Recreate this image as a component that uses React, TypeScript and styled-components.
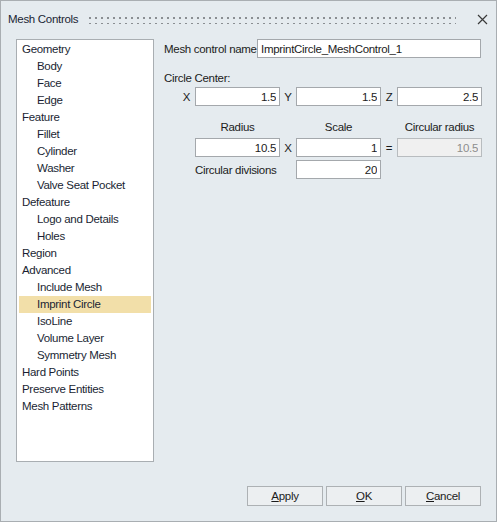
import React from 'react';
import { styled, createGlobalStyle } from 'styled-components';

const GlobalStyle = createGlobalStyle`
  html, body {
    margin: 0;
    padding: 0;
    background: #e5ebef;
  }
  * {
    box-sizing: border-box;
  }
`;

interface TreeItem {
  label: string;
  depth: number;
}

const treeItems: TreeItem[] = [
  { label: 'Geometry', depth: 0 },
  { label: 'Body', depth: 1 },
  { label: 'Face', depth: 1 },
  { label: 'Edge', depth: 1 },
  { label: 'Feature', depth: 0 },
  { label: 'Fillet', depth: 1 },
  { label: 'Cylinder', depth: 1 },
  { label: 'Washer', depth: 1 },
  { label: 'Valve Seat Pocket', depth: 1 },
  { label: 'Defeature', depth: 0 },
  { label: 'Logo and Details', depth: 1 },
  { label: 'Holes', depth: 1 },
  { label: 'Region', depth: 0 },
  { label: 'Advanced', depth: 0 },
  { label: 'Include Mesh', depth: 1 },
  { label: 'Imprint Circle', depth: 1 },
  { label: 'IsoLine', depth: 1 },
  { label: 'Volume Layer', depth: 1 },
  { label: 'Symmetry Mesh', depth: 1 },
  { label: 'Hard Points', depth: 0 },
  { label: 'Preserve Entities', depth: 0 },
  { label: 'Mesh Patterns', depth: 0 },
];

const selectedItem = 'Imprint Circle';

export default function App() {
  return (
    <>
      <GlobalStyle />
      <Styled.Window>
        <Styled.TitleBar>
          <Styled.Title>Mesh Controls</Styled.Title>
          <Styled.Grip />
          <Styled.Close aria-label="Close">
            <svg width="11" height="11" viewBox="0 0 11 11">
              <path d="M1 1L10 10M10 1L1 10" stroke="#3a3a3a" strokeWidth="1.2" />
            </svg>
          </Styled.Close>
        </Styled.TitleBar>

        <Styled.Body>
          <Styled.Tree>
            {treeItems.map((item) => (
              <Styled.TreeRow
                key={item.label}
                $depth={item.depth}
                $selected={item.label === selectedItem}
              >
                {item.label}
              </Styled.TreeRow>
            ))}
          </Styled.Tree>

          <Styled.Panel>
            <Styled.NameRow>
              <Styled.Label>Mesh control name</Styled.Label>
              <Styled.NameInput defaultValue="ImprintCircle_MeshControl_1" />
            </Styled.NameRow>

            <Styled.SectionLabel>Circle Center:</Styled.SectionLabel>

            <Styled.FieldGrid>
              <Styled.AxisLabel $first>X</Styled.AxisLabel>
              <Styled.Input defaultValue="1.5" />
              <Styled.AxisLabel>Y</Styled.AxisLabel>
              <Styled.Input defaultValue="1.5" />
              <Styled.AxisLabel>Z</Styled.AxisLabel>
              <Styled.Input defaultValue="2.5" />

              <span />
              <Styled.Head>Radius</Styled.Head>
              <span />
              <Styled.Head>Scale</Styled.Head>
              <span />
              <Styled.Head>Circular radius</Styled.Head>

              <span />
              <Styled.Input defaultValue="10.5" />
              <Styled.AxisLabel>X</Styled.AxisLabel>
              <Styled.Input defaultValue="1" />
              <Styled.AxisLabel>=</Styled.AxisLabel>
              <Styled.Input defaultValue="10.5" disabled />

              <span />
              <Styled.SpanLabel>Circular divisions</Styled.SpanLabel>
              <Styled.Input defaultValue="20" />
            </Styled.FieldGrid>
          </Styled.Panel>
        </Styled.Body>

        <Styled.Footer>
          <Styled.Button>
            <u>A</u>pply
          </Styled.Button>
          <Styled.Button>
            <u>O</u>K
          </Styled.Button>
          <Styled.Button>
            <u>C</u>ancel
          </Styled.Button>
        </Styled.Footer>
      </Styled.Window>
    </>
  );
}

const font = `'Liberation Sans', Arial, sans-serif`;

const Styled = {
  Window: styled.div`
    width: 497px;
    height: 522px;
    display: flex;
    flex-direction: column;
    border: 1px solid #a9aeb2;
    background: #e5ebef;
    font-family: ${font};
    font-size: 11.5px;
    letter-spacing: -0.3px;
    color: #1b1b1b;
  `,

  TitleBar: styled.div`
    height: 37px;
    flex: none;
    display: flex;
    align-items: center;
    padding: 0 8px 0 7px;
  `,
  Title: styled.div`
    color: #1a1f33;
    padding-bottom: 2px;
  `,
  Grip: styled.div`
    flex: 1;
    height: 8px;
    margin: 0 21px 0 11px;
    background-image: radial-gradient(circle, #8a8e92 0.9px, transparent 1.1px);
    background-size: 6px 6px;
    background-position: -2px -1px;
  `,
  Close: styled.div`
    width: 11px;
    height: 11px;
    display: flex;
    padding-bottom: 2px;
  `,

  Body: styled.div`
    flex: 1;
    display: flex;
    gap: 10px;
    padding: 1px 15px 0 15px;
    min-height: 0;
  `,

  Tree: styled.div`
    width: 138px;
    height: 423px;
    flex: none;
    background: #ffffff;
    border: 1px solid #a9aeb2;
    padding: 1px 2px 0;
  `,
  TreeRow: styled.div<{ $depth: number; $selected: boolean }>`
    height: 17px;
    line-height: 17px;
    white-space: nowrap;
    padding-left: ${(p) => (p.$depth === 0 ? 3 : 18)}px;
    background: ${(p) => (p.$selected ? '#f2dfa9' : 'transparent')};
    color: #1a1f33;
  `,

  Panel: styled.div`
    width: 317px;
    display: flex;
    flex-direction: column;
  `,
  NameRow: styled.div`
    display: flex;
    align-items: center;
    justify-content: space-between;
    height: 19px;
  `,
  Label: styled.span`
    white-space: nowrap;
  `,
  SectionLabel: styled.div`
    margin-top: 13px;
    height: 15px;
    line-height: 15px;
  `,

  FieldGrid: styled.div`
    margin-top: 1px;
    display: grid;
    grid-template-columns: 31px 85px 16px 85px 16px 85px;
    grid-template-rows: 19px 26px 19px 19px;
    row-gap: 3px;
    align-items: center;
  `,
  Head: styled.span`
    align-self: end;
    line-height: 15px;
    text-align: center;
    white-space: nowrap;
  `,
  AxisLabel: styled.span<{ $first?: boolean }>`
    text-align: ${(p) => (p.$first ? 'right' : 'center')};
    padding-right: ${(p) => (p.$first ? 5 : 0)}px;
  `,
  SpanLabel: styled.span`
    grid-column: 2 / 4;
    white-space: nowrap;
  `,

  Input: styled.input`
    width: 100%;
    height: 19px;
    margin: 0;
    border: 1px solid #a4a8ac;
    background: #ffffff;
    font-family: ${font};
    font-size: 11.5px;
    letter-spacing: -0.3px;
    color: #1b1b1b;
    text-align: right;
    padding: 0 3px;
    outline: none;

    &:disabled {
      background: #f0f0f0;
      color: #8d8d8d;
      border-color: #b8bcbf;
    }
  `,
  NameInput: styled.input`
    width: 224px;
    height: 19px;
    margin: 0;
    border: 1px solid #a4a8ac;
    background: #ffffff;
    font-family: ${font};
    font-size: 11.5px;
    letter-spacing: -0.3px;
    color: #1b1b1b;
    padding: 0 3px;
    outline: none;
  `,

  Footer: styled.div`
    flex: none;
    display: flex;
    justify-content: flex-end;
    gap: 3px;
    padding: 0 15px 15px 0;
  `,
  Button: styled.button`
    width: 76px;
    height: 20px;
    margin: 0;
    padding: 0;
    border: 1px solid #adb1b4;
    background: #eceff1;
    font-family: ${font};
    font-size: 11.5px;
    letter-spacing: -0.3px;
    color: #1b1b1b;
  `,
};
